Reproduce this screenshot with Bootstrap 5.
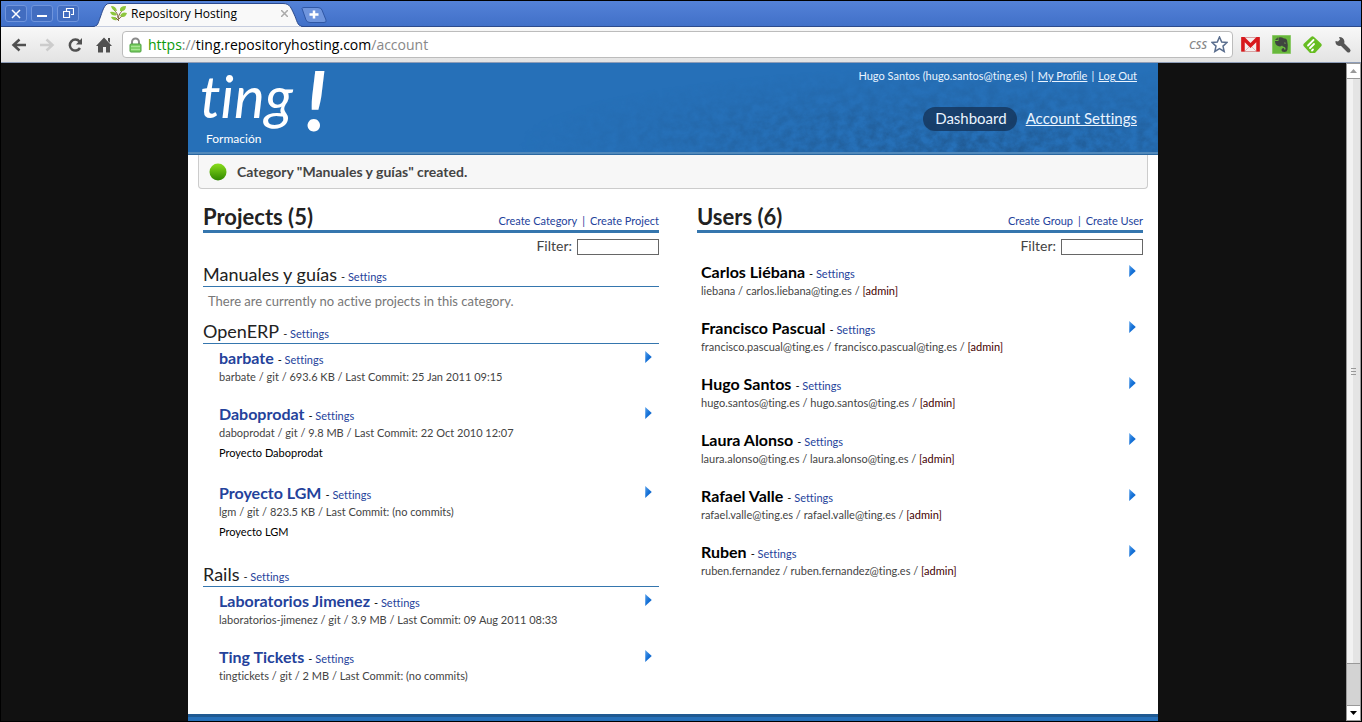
<!DOCTYPE html>
<html lang="en">
<head>
<meta charset="utf-8">
<meta name="viewport" content="width=device-width, initial-scale=1">
<title>Repository Hosting</title>
<link href="https://cdn.jsdelivr.net/npm/bootstrap@5.3.0/dist/css/bootstrap.min.css" rel="stylesheet">
<style>
  :root { --ui: "Open Sans", "Noto Sans", sans-serif; --page: Lato, "Open Sans", sans-serif; }
  body { background: #111; font-family: var(--page); font-variant-ligatures: none; font-size: 11px; line-height: 18px; color: #444; border: 1px solid #000; }
  button { border: 0; background: none; padding: 0; line-height: 0; }
  svg { display: block; }
  a { color: #24429b; text-decoration: none; }
  a:hover { text-decoration: underline; }

  /* browser window */
  .titlebar { height: 26px; background: linear-gradient(#5482d8, #4170c8); border-bottom: 1px solid #2c4a8c; font-family: var(--ui); }
  .winbtn { width: 22px; height: 17px; border: 1px solid #6f94dc; border-radius: 3px; background: #426dc0; display: grid; place-items: center; }
  .tab-shape { width: 210px; height: 25px; margin-left: 14px; }
  .tab-body { height: 25px; font-size: 12px; color: #000; padding: 0 15px 0 17px; }
  .newtab { margin: 6px 0 0 -2px; }
  .toolbar { height: 36px; background: linear-gradient(#f8f8f8, #e3e3e3); border-bottom: 1px solid #8e9db8; padding: 0 9px 0 10px; }
  .address { height: 27px; border: 1px solid #bcbcbc; border-radius: 4px; background: #fff; padding: 0 4px 0 6px; margin: 0 8px 0 10px; font-family: var(--ui); font-size: 14px; color: #888; }
  .address .url { padding-left: 2px; }
  .address .scheme { color: #0a9a0a; }
  .address .host { color: #000; }
  .css-label { font-size: 11px; font-weight: 600; font-style: italic; color: #888; }
  .tools { gap: 12px; }
  .stage { padding-right: 1px; }
  .scroller { width: 15px; border: 1px solid #999; background: #ccc; }
  .scroller button { height: 14px; background: #fff; display: grid; place-items: center; }
  .thumb { background: linear-gradient(90deg, #f2f2f2 50%, #e4e4e4 50%); border: solid #999; border-width: 1px 0; display: grid; place-items: center; }
  .track { height: 42px; background: #d3d3d3; border-bottom: 1px solid #999; }

  /* site */
  .site { width: 970px; max-width: 100%; background: #fff; }
  .banner { height: 92px; background: #2670b8; border-bottom: 1px solid #2a67a0; color: #eaf4ff; padding: 0 21px 0 13px; }
  .banner::after { content: ""; position: absolute; left: 0; right: 0; bottom: 0; height: 2px; background: #5189bb; }
  .banner a { color: #eaf4ff; text-decoration: underline; }
  .logo { overflow: visible; font-family: var(--page); }
  .account { padding-top: 4px; gap: 4px; }
  .menu { padding-top: 22px; gap: 9px; }
  .menu a { font-size: 15px; line-height: 22px; padding-bottom: 2px; }
  .menu a.current { text-decoration: none; background: rgba(20, 50, 85, .75); border-radius: 12px; padding: 0 10px 2px 12px; }
  .notice { margin: 0 10px; height: 34px; background: #f7f7f7; border: 1px solid #ccc; border-top: 0; border-radius: 0 0 4px 4px; font-size: 14px; font-weight: 700; padding-left: 10px; gap: 10px; }
  .panels { display: grid; grid-template-columns: 456fr 446fr; gap: 38px; padding: 13px 15px 0; }
  .panel-head { height: 31px; border-bottom: 3px solid #3576ae; color: #24429b; }
  .panel-head h2 { font-size: 22px; line-height: 29px; font-weight: 700; color: #222; }
  .links { gap: 5px; }
  .filter { height: 30px; padding-top: 6px; gap: 5px; }
  .filter label { font-size: 14px; line-height: 14px; }
  .filter input { width: 82px; height: 16px; border: 1px solid #666; padding: 0 3px; font-size: 11px; }
  .category { height: 24px; border-bottom: 1px solid #3576ae; color: #222; }
  .category h3 { font-size: 18px; line-height: 23px; font-weight: 400; color: #222; }
  .empty { padding: 5px; margin-bottom: 5px; font-size: 13px; color: #777; }
  .entries { padding: 5px 7px 0 16px; }
  .people { padding: 0 7px 0 4px; }
  .entry { padding-bottom: 19px; }
  .entry .name-line { height: 19px; }
  .entry h4 { font-size: 16px; line-height: 18px; font-weight: 700; color: #000; }
  .entry .about { color: #000; line-height: 22px; margin-bottom: 1px; }
  .entry .arrow { padding: 2px 0 0; }
  .dash { color: #000; }
  .role { color: #400; }
  .foot { height: 7px; background: #2670b8; border-top: 3px solid #1f5a92; }
</style>
</head>
<body class="min-vh-100 d-flex flex-column">
<svg width="0" height="0" class="position-absolute" aria-hidden="true">
  <linearGradient id="blue" x1="0" y1="0" x2="1" y2="1"><stop stop-color="#58a0ea"/><stop offset=".5" stop-color="#1672d8"/><stop offset="1" stop-color="#0a5cc0"/></linearGradient>
  <symbol id="play" viewBox="0 0 6 11"><path d="M0 0l6 5.500L0 11z" fill="url(#blue)"/></symbol>
</svg>

<header>
  <div class="titlebar d-flex align-items-start">
    <div class="d-flex pt-1 ps-1 gap-1">
      <button class="winbtn" aria-label="Close window"><svg width="10" height="10" stroke="#fff" stroke-width="1.500"><path d="M1 1l8 8M9 1l-8 8"/></svg></button>
      <button class="winbtn" aria-label="Minimize"><svg width="10" height="10" stroke="#fff" stroke-width="2"><path d="M0 7h10"/></svg></button>
      <button class="winbtn" aria-label="Restore"><svg width="11" height="11" fill="none" stroke="#fff"><path d="M3.500 3V.5h7v6H8M.5 3.500h6v6h-6z" stroke-width="1.200"/></svg></button>
    </div>
    <div class="tab-shape position-relative">
      <svg class="position-absolute top-0 start-0" width="210" height="26"><path d="M0 25.500C5 25.500 5 22 7 17S11 2.500 16 2.500H190C197 2.500 198 7 201 13S204 25.500 210 25.500V26H0z" fill="#f9f9f9" stroke="#2c4a8c"/><path d="M2 26h206" stroke="#f9f9f9"/></svg>
      <div class="tab-body position-relative d-flex align-items-center">
        <svg class="me-1" width="17" height="17" viewBox="0 0 17 17"><path d="M8.500 16C8 11 9 9 13 5M8 13C8 9 6 7 4 5M9 14q2-3 4-3M8 15q-2-3-4-2" fill="none" stroke="#7a5a3a"/><path d="M1 1q5 0 6 5-5 0-6-5zM10 6q-1-5 6-5 0 6-6 5zM0 7q5-1 7 3-5 2-7-3zM10 11q2-5 7-3-2 6-7 3zM1 12q4-1 6 3-4 1-6-3z" fill="#8dc63f"/></svg>
        <span class="flex-grow-1">Repository Hosting</span>
        <button aria-label="Close tab"><svg width="7" height="7" stroke="#aaa" stroke-width="1.500"><path d="M0 0l7 7M7 0L0 7"/></svg></button>
      </div>
    </div>
    <button class="newtab" aria-label="New tab"><svg width="26" height="16"><path d="M1 1.500Q1 .5 3 .5H17Q20 .5 21 3L25 13Q26 15.500 23 15.500H9Q6 15.500 5 13z" fill="#6f95dd" stroke="#2f57a5"/><path d="M8.500 7.500h9M13 3.500v8" stroke="#fff" stroke-width="2.500"/></svg></button>
  </div>
  <div class="toolbar d-flex align-items-center">
    <nav class="tools d-flex align-items-center">
      <button aria-label="Back"><svg width="16" height="16" fill="none" stroke="#505050" stroke-width="2.500"><path d="M15 8H3M8.500 2.500L2.500 8l6 5.500"/></svg></button>
      <button aria-label="Forward"><svg width="16" height="16" fill="none" stroke="#ccc" stroke-width="2.500"><path d="M1 8h12M7.500 2.500l6 5.500-6 5.500"/></svg></button>
      <button aria-label="Reload"><svg width="17" height="16"><path d="M13 11A5.500 5.500 0 1 1 12.500 4.500" fill="none" stroke="#505050" stroke-width="2.500"/><path d="M15 1V7.500H9z" fill="#505050"/></svg></button>
      <button aria-label="Home"><svg width="16" height="16" fill="#505050"><path d="M8 .5L16 9h-2v6.500h-4V10H7v5.500H2V9H0zM12 1h2v5l-2-2z"/></svg></button>
    </nav>
    <div class="address d-flex align-items-center flex-grow-1">
      <svg width="13" height="16" viewBox="0 0 13 16" class="me-1"><path d="M3 8V5a3.500 3.500 0 0 1 7 0v3" fill="none" stroke="#8a8a8a" stroke-width="2"/><rect x="1" y="7" width="11" height="8" rx="1" fill="#7fd068" stroke="#4ba03c"/><path d="M2 9.500h9M2 12.500h9" stroke="#a8e494"/></svg>
      <span class="url flex-grow-1"><span class="scheme">https</span>://<span class="host">ting.repositoryhosting.com</span>/account</span>
      <span class="css-label me-1">CSS</span>
      <button aria-label="Bookmark"><svg width="17" height="17" viewBox="0 0 17 17"><path d="M8.500 1l2.200 5 5.300.5-4 3.600 1.200 5.400-4.700-2.900-4.700 2.900L5 10.100 1 6.500 6.300 6z" fill="#fff" stroke="#5a6e8e" stroke-width="1.500"/></svg></button>
    </div>
    <div class="tools d-flex align-items-center">
      <button aria-label="Gmail"><svg width="19" height="15"><path d="M.5.500h18v14H.5z" fill="#f4eeee" stroke="#d9a0a0"/><path d="M2 14.500V1l7.500 7.500L17 1v13.500" fill="none" stroke="#d8181c" stroke-width="3.500"/><path d="M4 14l4-4M15 14l-4-4" stroke="#d8b8b8"/></svg></button>
      <button aria-label="Evernote"><svg width="19" height="19"><path d="M.5.500h18v18H.5z" fill="#68b83c" stroke="#8bc968"/><path d="M6.500 2.500q3-1 5 .7 3 0 3.500 1.800 1.300 5 .5 9.500-.5 2.500-3 2.500-3 0-3-2.200 0-1.800 2.500-1.800v1.500h1.500q.5-2-1-2.500-2-.3-2.500-1.500-1.500 1.500-4 .5Q3 10 3 6h3.500z" fill="#3f453f"/><path d="M3 5l2.800-2.800V5z" fill="#3f453f"/><path d="M12 8.200q.8-1.500 2 .3z" fill="#8fd060"/></svg></button>
      <button aria-label="Feedly"><svg width="19" height="18"><path d="M8 1q1.500-1.500 3 0l7 6.500q1.500 1.500 0 3L12 17H7L1 10.500q-1.500-1.500 0-3z" fill="#67bd22"/><path d="M5 9.500l5.500-5.500M7 12l4-4M9 14.500l1-1" stroke="#fff" stroke-width="1.800" stroke-linecap="round"/></svg></button>
      <button aria-label="Settings menu"><svg width="18" height="18"><path d="M7 7l7.500 7.500" stroke="#555" stroke-width="4" stroke-linecap="round"/><path d="M5 1l1 2.500L4 5.500 1.500 5Q1 9 5 10q5 0 5.500-4Q10 1 5 1z" fill="#555"/></svg></button>
    </div>
  </div>
</header>

<div class="d-flex flex-grow-1">
  <div class="stage flex-grow-1 d-flex justify-content-center">
    <div class="site d-flex flex-column">
      <header class="banner position-relative d-flex justify-content-between">
        <svg class="position-absolute top-0 start-0 w-100 h-100" aria-hidden="true">
          <defs>
            <filter id="grain" x="0" y="0" width="100%" height="100%" color-interpolation-filters="sRGB"><feTurbulence type="fractalNoise" baseFrequency=".1 .12" numOctaves="5" seed="9"/><feColorMatrix values="0 0 0 0 .12  0 0 0 0 .33  0 0 0 0 .54  2 0 0 0 -.55"/></filter>
            <radialGradient id="fade" cx=".82" cy=".72" r=".48"><stop stop-color="#fff" stop-opacity=".75"/><stop offset="1" stop-color="#fff" stop-opacity="0"/></radialGradient>
            <mask id="spot"><rect width="100%" height="180%" y="-40%" fill="url(#fade)"/></mask>
          </defs>
          <g mask="url(#spot)"><rect width="100%" height="100%" filter="url(#grain)"/></g>
        </svg>
        <svg class="logo position-relative" width="150" height="88" fill="#fff" role="img" aria-label="ting! Formación">
          <text x="-1" y="55" font-size="58" font-style="italic">ting</text>
          <text x="104" y="68" font-size="82" font-style="italic" font-weight="700">!</text>
          <text x="5" y="80" font-size="12">Formación</text>
        </svg>
        <div class="position-relative d-flex flex-column align-items-end">
          <div class="account d-flex"><span>Hugo Santos (hugo.santos@ting.es)</span><span>|</span><a href="#">My Profile</a><span>|</span><a href="#">Log Out</a></div>
          <nav class="menu d-flex"><a class="current" href="#">Dashboard</a><a href="#">Account Settings</a></nav>
        </div>
      </header>
      <div class="notice d-flex align-items-center" role="status">
        <svg width="18" height="18"><defs><linearGradient id="ok" x2="0" y2="1"><stop stop-color="#8ade1c"/><stop offset="1" stop-color="#2f8600"/></linearGradient></defs><circle cx="9" cy="9" r="8.500" fill="url(#ok)"/></svg>
        <span>Category "Manuales y guías" created.</span>
      </div>

      <main class="panels flex-grow-1">
        <section>
          <div class="panel-head d-flex justify-content-between align-items-baseline"><h2 class="m-0">Projects (5)</h2><div class="links d-flex"><a href="#">Create Category</a><span>|</span><a href="#">Create Project</a></div></div>
          <div class="filter d-flex justify-content-end align-items-start"><label for="fp">Filter:</label><input id="fp" type="text"></div>

          <div class="category d-flex align-items-baseline"><h3 class="m-0 me-1">Manuales y guías</h3><span>- <a href="#">Settings</a></span></div>
          <p class="empty">There are currently no active projects in this category.</p>

          <div class="category d-flex align-items-baseline"><h3 class="m-0 me-1">OpenERP</h3><span>- <a href="#">Settings</a></span></div>
          <div class="entries">
            <article class="entry d-flex justify-content-between align-items-start"><div><div class="name-line d-flex align-items-baseline"><h4 class="m-0 me-1"><a href="#">barbate</a></h4><span class="dash">- <a href="#">Settings</a></span></div><div>barbate / git / 693.6 KB / Last Commit: 25 Jan 2011 09:15</div></div><button class="arrow" aria-label="Expand barbate"><svg width="7" height="12"><use href="#play"/></svg></button></article>
            <article class="entry d-flex justify-content-between align-items-start"><div><div class="name-line d-flex align-items-baseline"><h4 class="m-0 me-1"><a href="#">Daboprodat</a></h4><span class="dash">- <a href="#">Settings</a></span></div><div>daboprodat / git / 9.8 MB / Last Commit: 22 Oct 2010 12:07</div><div class="about">Proyecto Daboprodat</div></div><button class="arrow" aria-label="Expand Daboprodat"><svg width="7" height="12"><use href="#play"/></svg></button></article>
            <article class="entry d-flex justify-content-between align-items-start"><div><div class="name-line d-flex align-items-baseline"><h4 class="m-0 me-1"><a href="#">Proyecto LGM</a></h4><span class="dash">- <a href="#">Settings</a></span></div><div>lgm / git / 823.5 KB / Last Commit: (no commits)</div><div class="about">Proyecto LGM</div></div><button class="arrow" aria-label="Expand Proyecto LGM"><svg width="7" height="12"><use href="#play"/></svg></button></article>
          </div>

          <div class="category d-flex align-items-baseline"><h3 class="m-0 me-1">Rails</h3><span>- <a href="#">Settings</a></span></div>
          <div class="entries">
            <article class="entry d-flex justify-content-between align-items-start"><div><div class="name-line d-flex align-items-baseline"><h4 class="m-0 me-1"><a href="#">Laboratorios Jimenez</a></h4><span class="dash">- <a href="#">Settings</a></span></div><div>laboratorios-jimenez / git / 3.9 MB / Last Commit: 09 Aug 2011 08:33</div></div><button class="arrow" aria-label="Expand Laboratorios Jimenez"><svg width="7" height="12"><use href="#play"/></svg></button></article>
            <article class="entry d-flex justify-content-between align-items-start"><div><div class="name-line d-flex align-items-baseline"><h4 class="m-0 me-1"><a href="#">Ting Tickets</a></h4><span class="dash">- <a href="#">Settings</a></span></div><div>tingtickets / git / 2 MB / Last Commit: (no commits)</div></div><button class="arrow" aria-label="Expand Ting Tickets"><svg width="7" height="12"><use href="#play"/></svg></button></article>
          </div>
        </section>

        <section>
          <div class="panel-head d-flex justify-content-between align-items-baseline"><h2 class="m-0">Users (6)</h2><div class="links d-flex"><a href="#">Create Group</a><span>|</span><a href="#">Create User</a></div></div>
          <div class="filter d-flex justify-content-end align-items-start"><label for="fu">Filter:</label><input id="fu" type="text"></div>
          <div class="people">
            <article class="entry d-flex justify-content-between align-items-start"><div><div class="name-line d-flex align-items-baseline"><h4 class="m-0 me-1">Carlos Liébana</h4><span class="dash">- <a href="#">Settings</a></span></div><div>liebana / carlos.liebana@ting.es / <span class="role">[admin]</span></div></div><button class="arrow" aria-label="Expand Carlos"><svg width="7" height="12"><use href="#play"/></svg></button></article>
            <article class="entry d-flex justify-content-between align-items-start"><div><div class="name-line d-flex align-items-baseline"><h4 class="m-0 me-1">Francisco Pascual</h4><span class="dash">- <a href="#">Settings</a></span></div><div>francisco.pascual@ting.es / francisco.pascual@ting.es / <span class="role">[admin]</span></div></div><button class="arrow" aria-label="Expand Francisco"><svg width="7" height="12"><use href="#play"/></svg></button></article>
            <article class="entry d-flex justify-content-between align-items-start"><div><div class="name-line d-flex align-items-baseline"><h4 class="m-0 me-1">Hugo Santos</h4><span class="dash">- <a href="#">Settings</a></span></div><div>hugo.santos@ting.es / hugo.santos@ting.es / <span class="role">[admin]</span></div></div><button class="arrow" aria-label="Expand Hugo"><svg width="7" height="12"><use href="#play"/></svg></button></article>
            <article class="entry d-flex justify-content-between align-items-start"><div><div class="name-line d-flex align-items-baseline"><h4 class="m-0 me-1">Laura Alonso</h4><span class="dash">- <a href="#">Settings</a></span></div><div>laura.alonso@ting.es / laura.alonso@ting.es / <span class="role">[admin]</span></div></div><button class="arrow" aria-label="Expand Laura"><svg width="7" height="12"><use href="#play"/></svg></button></article>
            <article class="entry d-flex justify-content-between align-items-start"><div><div class="name-line d-flex align-items-baseline"><h4 class="m-0 me-1">Rafael Valle</h4><span class="dash">- <a href="#">Settings</a></span></div><div>rafael.valle@ting.es / rafael.valle@ting.es / <span class="role">[admin]</span></div></div><button class="arrow" aria-label="Expand Rafael"><svg width="7" height="12"><use href="#play"/></svg></button></article>
            <article class="entry d-flex justify-content-between align-items-start"><div><div class="name-line d-flex align-items-baseline"><h4 class="m-0 me-1">Ruben</h4><span class="dash">- <a href="#">Settings</a></span></div><div>ruben.fernandez / ruben.fernandez@ting.es / <span class="role">[admin]</span></div></div><button class="arrow" aria-label="Expand Ruben"><svg width="7" height="12"><use href="#play"/></svg></button></article>
          </div>
        </section>
      </main>
      <footer class="foot"></footer>
    </div>
  </div>
  <div class="scroller d-flex flex-column flex-shrink-0">
    <button aria-label="Scroll up"><svg width="7" height="4" fill="#999"><path d="M0 4l3.500-4L7 4z"/></svg></button>
    <div class="thumb flex-grow-1"><svg width="5" height="7" stroke="#999"><path d="M0 .5h5M0 3.500h5M0 6.500h5"/></svg></div>
    <div class="track"></div>
    <button aria-label="Scroll down"><svg width="7" height="4"><path d="M0 0l3.500 4L7 0z"/></svg></button>
  </div>
</div>
<script src="https://cdn.jsdelivr.net/npm/bootstrap@5.3.0/dist/js/bootstrap.bundle.min.js"></script>
</body>
</html>
